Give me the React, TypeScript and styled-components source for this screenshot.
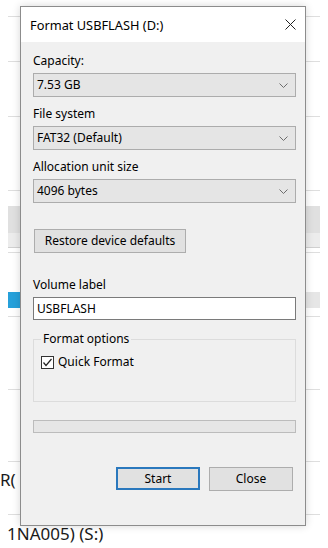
import styled, { createGlobalStyle } from "styled-components";

const GlobalStyle = createGlobalStyle`
  html, body {
    margin: 0;
    padding: 0;
    background: #fff;
  }
  body {
    width: 328px;
    height: 548px;
    overflow: hidden;
    font-family: "Noto Sans", "Open Sans", Arial, sans-serif;
    color: #000;
  }
`;

const Page = styled.div`
  position: relative;
  width: 328px;
  height: 548px;
  overflow: hidden;
  background: #fff;
`;

// explorer window behind the dialog
const Backdrop = styled.div`
  display: flex;
  flex-direction: column;
  margin-left: 8px;
  width: 312px;
  height: 548px;
`;

const Row = styled.div<{ $h?: number; $rule?: boolean }>`
  box-sizing: border-box;
  flex: ${(p) => (p.$h ? `0 0 ${p.$h}px` : "1")};
  border-bottom: ${(p) => (p.$rule ? "1px solid #dedede" : "none")};
`;

const Band = styled.div<{ $h: number; $tone: string; $rule?: boolean }>`
  box-sizing: border-box;
  flex: 0 0 ${(p) => p.$h}px;
  background: ${(p) => p.$tone};
  border-bottom: ${(p) => (p.$rule ? "1px solid #d0d0d0" : "none")};
`;

const UsageBar = styled.div`
  display: flex;
  flex: 0 0 16px;
  background: #e6e6e6;
`;

const UsageFill = styled.div`
  background: #26a0da;
`;

const TileText = styled.div<{ $pad: number; $shift: number }>`
  padding-top: ${(p) => p.$pad}px;
  margin-left: ${(p) => p.$shift}px;
  font-size: 17px;
  line-height: 20px;
  color: #1a1a1a;
  white-space: nowrap;
`;

// the dialog lies over the explorer window
const Dialog = styled.div`
  position: absolute;
  left: 20px;
  top: 6px;
  width: 286px;
  height: 520px;
  box-sizing: border-box;
  display: flex;
  flex-direction: column;
  background: #f0f0f0;
  border: 1px solid #8c8c8c;
  box-shadow: 0 0 8px rgba(0, 0, 0, 0.16);
  font-size: 12px;
  line-height: 16px;
`;

const TitleBar = styled.div`
  flex: 0 0 35px;
  display: flex;
  align-items: center;
  justify-content: space-between;
  padding: 0 9px 0 9px;
  background: #fff;
`;

const Title = styled.span`
  font-size: 12.8px;
`;

const Body = styled.div`
  flex: 1;
  display: flex;
  flex-direction: column;
  padding: 11px 9px 0 12px;
`;

const Field = styled.div<{ $top?: number }>`
  display: flex;
  flex-direction: column;
  gap: 4px;
  margin-top: ${(p) => p.$top ?? 0}px;
`;

const Label = styled.label`
  height: 16px;
`;

const Select = styled.div`
  box-sizing: border-box;
  height: 24px;
  display: flex;
  align-items: center;
  justify-content: space-between;
  padding: 0 7px 0 3px;
  background: #e5e5e5;
  border: 1px solid #acacac;
`;

const TextInput = styled.div`
  box-sizing: border-box;
  height: 23px;
  display: flex;
  align-items: center;
  padding: 0 3px;
  background: #fff;
  border: 1px solid #7a7a7a;
`;

const Button = styled.div<{ $primary?: boolean; $w: number }>`
  box-sizing: border-box;
  width: ${(p) => p.$w}px;
  height: ${(p) => (p.$primary ? 23 : 24)}px;
  display: flex;
  align-items: center;
  justify-content: center;
  background: #e1e1e1;
  border: ${(p) => (p.$primary ? "2px solid #2a78bd" : "1px solid #adadad")};
`;

const RestoreButton = styled(Button)`
  margin-top: 26px;
  margin-left: 1px;
`;

const Group = styled.fieldset`
  margin: 11px 0 0;
  padding: 7px 8px 31px 7px;
  border: 1px solid #dcdcdc;
  min-width: 0;
`;

const Legend = styled.legend`
  padding: 0 2px;
  margin-left: 0;
`;

const CheckRow = styled.div`
  display: flex;
  align-items: center;
  gap: 4px;
  height: 16px;
`;

const CheckBox = styled.div`
  box-sizing: border-box;
  width: 13px;
  height: 13px;
  background: #fff;
  border: 1px solid #333;
  display: flex;
  align-items: center;
  justify-content: center;
`;

const Progress = styled.div`
  box-sizing: border-box;
  margin-top: 18px;
  height: 13px;
  background: #e6e6e6;
  border: 1px solid #bcbcbc;
`;

const ButtonRow = styled.div`
  display: flex;
  justify-content: flex-end;
  gap: 9px;
  margin-top: 34px;
  padding-right: 3px;
`;

const Chevron = () => (
  <svg width="9" height="5" viewBox="0 0 9 5">
    <polyline points="0.5,0.5 4.5,4.5 8.5,0.5" fill="none" stroke="#6d6d6d" strokeWidth="1" />
  </svg>
);

const CloseIcon = () => (
  <svg width="11" height="11" viewBox="0 0 11 11">
    <path d="M0.5 0.5 L10.5 10.5 M10.5 0.5 L0.5 10.5" stroke="#222" strokeWidth="1" />
  </svg>
);

const Tick = () => (
  <svg width="11" height="11" viewBox="0 0 11 11">
    <polyline points="1.5,5.5 4,8.5 9.5,2" fill="none" stroke="#222" strokeWidth="1.2" />
  </svg>
);

type DropProps = { label: string; value: string; top?: number };

const Dropdown = ({ label, value, top }: DropProps) => (
  <Field $top={top}>
    <Label>{label}</Label>
    <Select>
      <span>{value}</span>
      <Chevron />
    </Select>
  </Field>
);

export default function App() {
  return (
    <>
      <GlobalStyle />
      <Page>
        <Backdrop>
          <Row $h={17} $rule />
          <Row $h={45} $rule />
          <Row $h={55} $rule />
          <Row $h={74} $rule />
          <Row $h={15} />
          <Band $h={27} $tone="#e0e0e0" />
          <Band $h={15} $tone="#ececec" $rule />
          <Row $h={5} $rule />
          <Row $h={39} />
          <UsageBar>
            <UsageFill style={{ width: "42%" }} />
          </UsageBar>
          <Row $h={9} $rule />
          <Row $h={73} $rule />
          <Row $h={72} $rule />
          <Row $h={53} $rule>
            <TileText $pad={8} $shift={-8}>R(</TileText>
          </Row>
          <Row>
            <TileText $pad={9} $shift={-1}>1NA005) (S:)</TileText>
          </Row>
        </Backdrop>

        <Dialog>
          <TitleBar>
            <Title>Format USBFLASH (D:)</Title>
            <CloseIcon />
          </TitleBar>
          <Body>
            <Dropdown label="Capacity:" value="7.53 GB" />
            <Dropdown label="File system" value="FAT32 (Default)" top={9} />
            <Dropdown label="Allocation unit size" value="4096 bytes" top={9} />
            <RestoreButton $w={152}>Restore device defaults</RestoreButton>
            <Field $top={24}>
              <Label>Volume label</Label>
              <TextInput>USBFLASH</TextInput>
            </Field>
            <Group>
              <Legend>Format options</Legend>
              <CheckRow>
                <CheckBox>
                  <Tick />
                </CheckBox>
                <span>Quick Format</span>
              </CheckRow>
            </Group>
            <Progress />
            <ButtonRow>
              <Button $primary $w={84}>Start</Button>
              <Button $w={84}>Close</Button>
            </ButtonRow>
          </Body>
        </Dialog>
      </Page>
    </>
  );
}
